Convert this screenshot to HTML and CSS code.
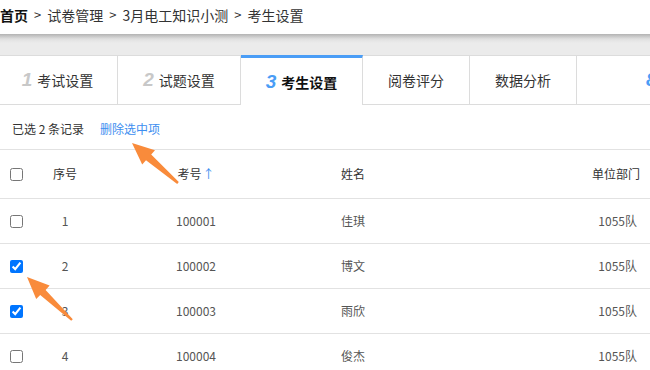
FILE: index.html
```html
<!DOCTYPE html>
<html lang="zh-CN">
<head>
<meta charset="utf-8">
<title>考生设置</title>
<link rel="stylesheet" href="styles.css">
</head>
<body>
<div class="page">
  <div class="crumbs">
    <span class="home">首页</span><span class="sep">&gt;</span><span>试卷管理</span><span class="sep">&gt;</span><span>3月电工知识小测</span><span class="sep">&gt;</span><span>考生设置</span>
  </div>
  <div class="shade"></div>
  <div class="tabs">
    <div class="tab t1"><span class="num">1</span>考试设置</div>
    <div class="tab t2"><span class="num">2</span>试题设置</div>
    <div class="tab t3 active"><span class="num">3</span>考生设置</div>
    <div class="tab t4">阅卷评分</div>
    <div class="tab t5">数据分析</div>
    <div class="tab t6"><span class="num blue">8</span>成绩发布</div>
  </div>
  <div class="toolbar">
    <span>已选 2 条记录</span><a class="del">删除选中项</a>
  </div>
  <div class="table">
    <div class="row head">
      <div class="c-check"><input type="checkbox"></div>
      <div class="c-seq">序号</div>
      <div class="c-no">考号<span class="sort">↑</span></div>
      <div class="c-name">姓名</div>
      <div class="c-dept">单位部门</div>
    </div>
    <div class="row">
      <div class="c-check"><input type="checkbox"></div>
      <div class="c-seq">1</div>
      <div class="c-no">100001</div>
      <div class="c-name">佳琪</div>
      <div class="c-dept">1055队</div>
    </div>
    <div class="row">
      <div class="c-check"><input type="checkbox" checked></div>
      <div class="c-seq">2</div>
      <div class="c-no">100002</div>
      <div class="c-name">博文</div>
      <div class="c-dept">1055队</div>
    </div>
    <div class="row">
      <div class="c-check"><input type="checkbox" checked></div>
      <div class="c-seq">3</div>
      <div class="c-no">100003</div>
      <div class="c-name">雨欣</div>
      <div class="c-dept">1055队</div>
    </div>
    <div class="row">
      <div class="c-check"><input type="checkbox"></div>
      <div class="c-seq">4</div>
      <div class="c-no">100004</div>
      <div class="c-name">俊杰</div>
      <div class="c-dept">1055队</div>
    </div>
  </div>
  <svg class="arrows" width="650" height="370" viewBox="0 0 650 370">
    <polygon fill="#f98b3b" points="132,143 155,150.2 151.2,154.6 178.8,182.1 177.2,183.9 146,160.2 142.2,164.6"/>
    <polygon fill="#f98b3b" points="27,277 49.6,285.4 45.6,289.9 72.8,319.2 71.2,320.8 40.2,294.9 36.2,299.1"/>
  </svg>
</div>
</body>
</html>
```

FILE: styles.css
```css
* { box-sizing: border-box; }
html, body { margin: 0; padding: 0; background: #fff; }
body {
  font-family: "Noto Sans CJK SC", "Noto Sans", sans-serif;
  color: #333;
  width: 650px;
  height: 370px;
  overflow: hidden;
}
.page { position: relative; width: 650px; height: 370px; overflow: hidden; }

.crumbs {
  height: 34px;
  display: flex;
  align-items: center;
  font-size: 14px;
  line-height: 20px;
  padding-bottom: 4px;
  color: #333;
  white-space: nowrap;
}
.crumbs .home { font-weight: bold; color: #111; }
.crumbs .sep { margin: 0 6px; font-size: 13px; }

.shade {
  height: 21px;
  background: linear-gradient(#b3b3b3 0, #e0e0e0 5px, #ebebeb 9px, #ebebeb 100%);
}

.tabs {
  display: flex;
  height: 50px;
  background: #ebebeb;
  white-space: nowrap;
}
.tab {
  flex: none;
  display: flex;
  align-items: center;
  justify-content: center;
  background: #fff;
  border-top: 1px solid #dcdcdc;
  border-bottom: 1px solid #dcdcdc;
  border-right: 1px solid #dcdcdc;
  font-size: 14px;
  line-height: 20px;
  color: #333;
}
.t1 { width: 118px; padding-right: 2px; }
.t2 { width: 123px; }
.t3 { width: 122px; }
.t4 { width: 107px; }
.t5 { width: 107px; }
.t6 { width: 200px; justify-content: flex-start; padding-left: 69px; border-right: none; }
.tab .num {
  font-family: "Liberation Sans", Arial, sans-serif;
  font-style: italic;
  font-weight: bold;
  font-size: 19px;
  color: #c8c8c8;
  margin-right: 5px;
}
.tab.active {
  border-top: 3px solid #4a9df6;
  border-bottom: none;
  font-weight: bold;
  color: #111;
}
.tab.active .num, .tab .num.blue { color: #4a9df6; }

.toolbar {
  height: 45px;
  display: flex;
  align-items: center;
  padding: 3px 0 0 12px;
  font-size: 12px;
  line-height: 16px;
  border-bottom: 1px solid #e2e2e2;
  color: #333;
}
.toolbar .del { color: #3d8ef0; margin-left: 16px; }

.row {
  display: grid;
  grid-template-columns: 36px 58px 204px 200px 1fr;
  align-items: center;
  height: 45px;
  border-bottom: 1px solid #e2e2e2;
  font-size: 12px;
  line-height: 16px;
  color: #555;
}
.row.head { height: 49px; color: #333; }
.c-check { padding-left: 10px; display: flex; align-items: center; }
.c-check input { margin: 0; width: 13px; height: 13px; }
.c-seq { text-align: center; }
.c-no { text-align: center; }
.c-name { padding-left: 43px; }
.c-dept { text-align: right; padding-right: 10px; }
.row:not(.head) .c-dept { padding-right: 13px; }
.sort { color: #3d8ef0; margin-left: 1px; }

.arrows { position: absolute; left: 0; top: 0; pointer-events: none; }
```
